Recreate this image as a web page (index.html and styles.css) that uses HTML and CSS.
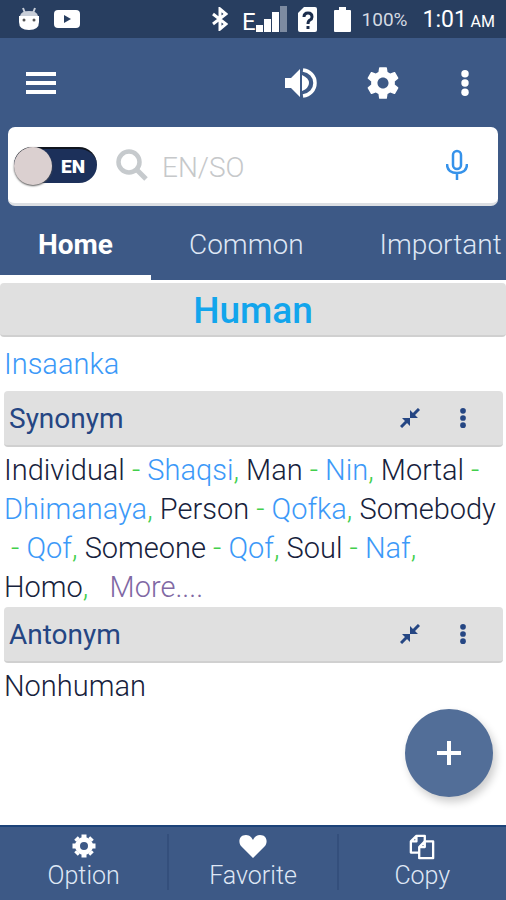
FILE: index.html
```html
<!DOCTYPE html>
<html lang="en">
<head>
  <meta charset="UTF-8">
  <meta name="viewport" content="width=device-width, initial-scale=1.0">
  <title>Dictionary EN/SO</title>
  <link rel="stylesheet" href="styles.css">
</head>
<body>
  <!-- icons used more than once -->
  <svg class="sprite" aria-hidden="true">
    <symbol id="dots" viewBox="0 0 8 28">
      <circle cx="4" cy="4" r="4"/><circle cx="4" cy="14" r="4"/><circle cx="4" cy="24" r="4"/>
    </symbol>
    <symbol id="collapse" viewBox="0 0 20 20">
      <path d="M1 19L7 13M19 1L13 7" fill="none" stroke="currentColor" stroke-width="3"/>
      <path d="M2 10H10V18L7 15L5 13ZM10 2V10H18L15 7L13 5Z"/>
    </symbol>
  </svg>

  <div class="status-bar">
    <svg width="20" height="24" viewBox="0 0 20 24" fill="#fff"><path d="M4 1L6 6M16 1L14 6" stroke="#c8ced8" stroke-width="2"/><path d="M1 9Q2 4 10 4T19 9Z" fill="#c8ced8"/><path d="M0 9H20V15Q20 23 10 23T0 15Z"/><circle cx="5" cy="13" r="1.500" fill="#555"/><circle cx="15" cy="13" r="1.500" fill="#555"/></svg>
    <svg width="26" height="18" viewBox="0 0 26 18"><rect width="26" height="18" rx="4" fill="#fff"/><path d="M10 5L17 9L10 13Z" fill="#283e60"/></svg>
    <div class="status-right">
      <svg width="16" height="24" viewBox="0 0 16 24" fill="none" stroke="#fff" stroke-width="3"><path d="M1 7L14 17L8 22V2L14 7L1 17"/></svg>
      <div class="signal">
        <span>E</span>
        <svg width="31" height="26" viewBox="0 0 31 26" fill="#fff"><path d="M0 19H7V26H0ZM8 13H15V26H8ZM16 6H23V26H16Z"/><path d="M24 0H31V26H24Z" fill="#7d8ba1"/></svg>
      </div>
      <svg width="19" height="25" viewBox="0 0 19 25"><path d="M6 0H17Q19 0 19 2V23Q19 25 17 25H2Q0 25 0 23V6Z" fill="#fff"/><path d="M6 10Q6 6 10 6T14 10Q14 12 12 13Q10 14 10 17M10 19V22" fill="none" stroke="#1b2d4c" stroke-width="3"/></svg>
      <svg class="battery" width="17" height="25" viewBox="0 0 17 25" fill="#fff"><path d="M5 0H12V3H16Q17 3 17 4V24Q17 25 16 25H1Q0 25 0 24V4Q0 3 1 3H5Z"/></svg>
      <span class="percent">100%</span>
      <span class="clock">1:01 <small>AM</small></span>
    </div>
  </div>

  <header class="header-area">
    <div class="toolbar">
      <button class="icon-button menu-button" aria-label="Menu">
        <svg width="30" height="22" viewBox="0 0 30 22" fill="#fff"><path d="M0 0H30V4H0ZM0 9H30V13H0ZM0 18H30V22H0Z"/></svg>
      </button>
      <button class="icon-button" aria-label="Sound">
        <svg width="32" height="30" viewBox="0 0 32 30" fill="#fff"><path d="M0 10H6L15 1V29L6 20H0ZM17 7Q24 10 24 15T17 23Z"/><path d="M18 2C25 3 30 8 30 15S25 27 18 28" fill="none" stroke="#fff" stroke-width="3.500"/></svg>
      </button>
      <button class="icon-button" aria-label="Settings">
        <svg width="38" height="38" viewBox="0 0 24 24" fill="#fff"><path d="M19.430 12.980c.04-.32.07-.64.07-.98s-.03-.66-.07-.98l2.110-1.650c.19-.15.24-.42.12-.64l-2-3.460c-.12-.22-.39-.3-.61-.22l-2.490 1c-.52-.4-1.080-.73-1.690-.98l-.38-2.650C14.460 2.180 14.250 2 14 2h-4c-.25 0-.46.18-.49.42l-.38 2.650c-.61.25-1.170.59-1.690.98l-2.490-1c-.23-.09-.49 0-.61.22l-2 3.460c-.13.22-.07.49.12.64l2.110 1.650c-.04.32-.07.65-.07.98s.03.66.07.98l-2.110 1.650c-.19.15-.24.42-.12.64l2 3.460c.12.22.39.3.61.22l2.490-1c.52.4 1.080.73 1.690.98l.38 2.650c.03.24.24.42.49.42h4c.25 0 .46-.18.49-.42l.38-2.650c.61-.25 1.170-.59 1.690-.98l2.490 1c.23.09.49 0 .61-.22l2-3.460c.12-.22.07-.49-.12-.64l-2.110-1.650zM12 15.500c-1.930 0-3.500-1.570-3.500-3.500s1.570-3.500 3.500-3.500 3.500 1.570 3.500 3.500-1.570 3.500-3.500 3.500z"/></svg>
      </button>
      <button class="icon-button" aria-label="More"><svg width="8" height="26"><use href="#dots"/></svg></button>
    </div>

    <div class="search-box">
      <label class="lang-switch">
        <input type="checkbox" aria-label="Language">
        <span class="knob"></span>
        <span class="lang">EN</span>
      </label>
      <svg class="search-icon" width="32" height="32" viewBox="0 0 32 32" fill="none" stroke="#c6cacd"><circle cx="13" cy="13" r="10.500" stroke-width="4.500"/><path d="M20 20L30 30" stroke-width="5"/></svg>
      <input class="search-input" type="text" placeholder="EN/SO" aria-label="Search">
      <button class="mic-button" aria-label="Voice search">
        <svg width="22" height="32" viewBox="0 0 22 32" fill="none" stroke="#3592ea" stroke-width="2.500"><rect x="7" y="2" width="8" height="18" rx="4"/><path d="M1 15C1 21 5 24 11 24S21 21 21 15M11 24V31"/></svg>
      </button>
    </div>

    <nav class="tabs">
      <a href="#" class="active">Home</a>
      <a href="#">Common</a>
      <a href="#">Important</a>
    </nav>
  </header>

  <main>
    <h1 class="bar headword">Human</h1>
    <p class="words blue">Insaanka</p>

    <div class="bar section-bar">
      <h2>Synonym</h2>
      <button class="icon-button" aria-label="Collapse synonyms"><svg width="20" height="20"><use href="#collapse"/></svg></button>
      <button class="icon-button" aria-label="Synonym options"><svg width="6" height="20"><use href="#dots"/></svg></button>
    </div>
    <p class="words">Individual <i>-</i> <b>Shaqsi</b><i>,</i> Man <i>-</i> <b>Nin</b><i>,</i> Mortal <i>-</i> <b>Dhimanaya</b><i>,</i> Person <i>-</i> <b>Qofka</b><i>,</i> Somebody<br>&nbsp;<i>-</i> <b>Qof</b><i>,</i> Someone <i>-</i> <b>Qof</b><i>,</i> Soul <i>-</i> <b>Naf</b><i>,</i><br>Homo<i>,</i> &nbsp; <a href="#" class="more">More....</a></p>

    <div class="bar section-bar">
      <h2>Antonym</h2>
      <button class="icon-button" aria-label="Collapse antonyms"><svg width="20" height="20"><use href="#collapse"/></svg></button>
      <button class="icon-button" aria-label="Antonym options"><svg width="6" height="20"><use href="#dots"/></svg></button>
    </div>
    <p class="words">Nonhuman</p>

    <button class="add-button" aria-label="Add">
      <svg width="24" height="24" viewBox="0 0 24 24"><path d="M12 0V24M0 12H24" stroke="#fff" stroke-width="4"/></svg>
    </button>
  </main>

  <footer class="bottom-bar">
    <button>
      <svg width="24" height="24" viewBox="-12 -12 24 24"><circle r="6.500" fill="none" stroke="#fff" stroke-width="5"/><path d="M0-8V-11.500M0 8V11.500M-8 0H-11.500M8 0H11.500M-6-6L-8-8M6-6L8-8M-6 6L-8 8M6 6L8 8" stroke="#fff" stroke-width="5"/></svg>
      Option
    </button>
    <button>
      <svg width="28" height="24" viewBox="0 0 28 24" fill="#fff"><path d="M14 24L2 12C-1 8 0 1 7 1C11 1 13 4 14 6C15 4 17 1 21 1C28 1 29 8 26 12Z"/></svg>
      Favorite
    </button>
    <button>
      <svg width="26" height="26" viewBox="0 0 28 28" fill="#3d5986" stroke="#fff" stroke-width="2.500" stroke-linejoin="round"><path d="M8 2H17V20H2V8ZM8 2V8H2"/><path d="M17 8H26V26H11V14ZM17 8V14H11"/></svg>
      Copy
    </button>
  </footer>
</body>
</html>
```

FILE: styles.css
```css
* {
  box-sizing: border-box;
}
body {
  margin: 0;
  min-height: 100vh;
  display: flex;
  flex-direction: column;
  font-family: Roboto, sans-serif;
  font-size: 28px;
  font-weight: 300;
  color: #17223c;
  background: #fff;
  overflow-x: hidden;
}
button {
  padding: 0;
  border: none;
  background: none;
  font: inherit;
  color: inherit;
  cursor: pointer;
}
svg {
  display: block;
  flex-shrink: 0;
}
a {
  color: inherit;
  text-decoration: none;
}
.sprite {
  position: absolute;
  width: 0;
  height: 0;
}

/* status bar */
.status-bar {
  display: flex;
  align-items: center;
  gap: 15px;
  height: 38px;
  padding: 0 11px 0 19px;
  background: #283e60;
  color: #fff;
}
.status-right {
  display: flex;
  align-items: center;
  gap: 11px;
  margin-left: auto;
  white-space: nowrap;
}
.signal {
  display: flex;
  align-items: flex-end;
  height: 26px;
  margin-left: 3px;
}
.signal span {
  font-size: 24px;
  line-height: 20px;
  font-weight: 400;
}
.battery {
  margin-left: 6px;
}
.percent {
  font-size: 19px;
  font-weight: 400;
  color: #d5dae2;
}
.clock {
  margin-left: 4px;
  font-size: 23px;
  font-weight: 400;
}
.clock small {
  margin-left: -2px;
  font-size: 16px;
}

/* header */
.header-area {
  background: #3d5986;
  color: #fff;
}
.toolbar {
  display: flex;
  align-items: center;
  height: 89px;
}
.icon-button {
  display: flex;
  align-items: center;
  justify-content: center;
  width: 82px;
  height: 48px;
  fill: currentColor;
}
.menu-button {
  margin-right: auto;
}
.search-box {
  display: flex;
  align-items: center;
  height: 79px;
  margin: 0 8px;
  padding: 0 30px 0 6px;
  background: #fff;
  border-radius: 7px;
  border-bottom: 3px solid #dcdfe3;
}
.lang-switch {
  display: flex;
  align-items: center;
  width: 83px;
  height: 36px;
  border-radius: 18px;
  background: #1c305a;
  border-top: 2px solid #10151f;
  cursor: pointer;
}
.lang-switch input {
  position: absolute;
  opacity: 0;
}
.knob {
  width: 38px;
  height: 38px;
  flex-shrink: 0;
  border-radius: 50%;
  background: #dbd0d0;
  box-shadow: 0 1px 2px #555;
}
.lang {
  margin-left: 9px;
  font-size: 19px;
  font-weight: 900;
  color: #fff;
}
.search-icon {
  margin-left: 19px;
}
.search-input {
  flex: 1;
  min-width: 0;
  height: 76px;
  margin-left: 14px;
  padding: 4px 0 0;
  border: none;
  outline: none;
  background: none;
  font: inherit;
}
.search-input::placeholder {
  color: #c6c8ca;
}
.tabs {
  display: flex;
  height: 74px;
  overflow: hidden;
}
.tabs a {
  flex-shrink: 0;
  padding: 0 38px;
  line-height: 77px;
  color: #dfe7f5;
}
.tabs .active {
  color: #fff;
  font-weight: 700;
  border-bottom: 5px solid #fff;
}

/* entry */
main {
  flex: 1;
  position: relative;
  padding-top: 3px;
}
.bar {
  background: #e0e0e0;
  border-radius: 4px;
  border-bottom: 2px solid #d0d0d0;
}
.headword {
  margin: 0;
  height: 54px;
  line-height: 56px;
  font-size: 37px;
  font-weight: 500;
  text-align: center;
  color: #12a5ec;
}
.section-bar {
  display: flex;
  align-items: center;
  height: 56px;
  margin: 0 3px 0 4px;
  padding: 0 14px 0 5px;
  color: #254683;
}
.section-bar h2 {
  flex: 1;
  margin: 0;
  font-size: 28px;
  font-weight: 400;
}
.section-bar .icon-button {
  width: 53px;
}
.words {
  margin: 0;
  padding: 4px 0 0 4px;
  font-size: 29px;
  line-height: 39px;
}
.words.blue {
  padding: 8px 4px 7px;
}
.words i {
  font-style: normal;
  color: #42cf4c;
}
.words b,
.words.blue {
  font-weight: 300;
  color: #3c99f8;
}
.words .more {
  color: #8068a4;
}
.add-button {
  position: absolute;
  right: 13px;
  bottom: 28px;
  display: flex;
  align-items: center;
  justify-content: center;
  width: 88px;
  height: 88px;
  border-radius: 50%;
  background: #526e98;
  box-shadow: 3px 5px 8px rgba(0, 0, 0, 0.2);
}

/* bottom bar */
.bottom-bar {
  display: flex;
  height: 75px;
  padding: 7px 0 10px;
  background: #3d5986;
  border-top: 2px solid #1d4379;
}
.bottom-bar button {
  flex: 1;
  display: flex;
  flex-direction: column;
  align-items: center;
  justify-content: space-between;
  font-size: 25px;
  line-height: 28px;
  color: #dfe7f5;
  border-right: 2px solid #344f7c;
}
.bottom-bar button:last-child {
  border-right: none;
}
```
